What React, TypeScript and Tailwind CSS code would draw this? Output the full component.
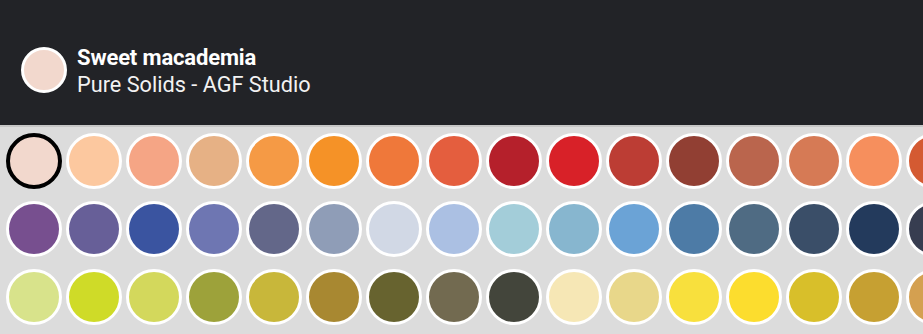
import React from 'react';

const rows: string[][] = [
  ['#f2d8cd', '#fcc89f', '#f5a585', '#e6b185', '#f59a45', '#f59227', '#ef783a', '#e45e3e', '#b5202b', '#d82128', '#bc3d34', '#913f33', '#ba654d', '#d67a55', '#f68f5d', '#d45a32'],
  ['#774f8f', '#675f98', '#3a54a0', '#6e76b2', '#636789', '#8f9db7', '#d1d8e5', '#abc0e3', '#a3cdd9', '#87b6cf', '#6ba3d6', '#4d7ba6', '#4f6b83', '#3a4e68', '#233a5c', '#373d50'],
  ['#d8e38b', '#cfdb28', '#d3d85c', '#9da23a', '#c8b73a', '#a88831', '#67632f', '#726a50', '#43453b', '#f6e7b5', '#e8d78a', '#f8e03d', '#fcdd2e', '#d8bf2a', '#c6a032', '#d4a050'],
];

const App = () => {
  return (
    <div className="w-[923px] h-[334px] overflow-hidden bg-[#dcdcdc]" style={{ fontFamily: 'Roboto, "Liberation Sans", sans-serif' }}>
      <header className="h-[127px] bg-[#222327] border-b-2 border-[#c6c6c6] flex items-center pl-[21px] pt-[12px] gap-[10px]">
        <div className="w-[46px] h-[46px] rounded-full border-[3px] border-white bg-[#f2d8cd] shrink-0 mt-[2px]" />
        <div className="flex flex-col leading-[27px] mt-[5px]">
          <span className="text-white text-[22px] font-bold tracking-[-0.15px]">Sweet macademia</span>
          <span className="text-[#f2f2f2] text-[21.7px]">Pure Solids - AGF Studio</span>
        </div>
      </header>

      <div className="pt-[6px] pl-[6px] flex flex-col gap-[12px]">
        {rows.map((row, r) => (
          <div key={r} className="flex gap-[4px] flex-nowrap">
            {row.map((c, i) => (
              <div
                key={c + i}
                className={
                  r === 0 && i === 0
                    ? 'w-[56px] h-[56px] shrink-0 rounded-full border-4 border-black'
                    : 'w-[56px] h-[56px] shrink-0 rounded-full border-[3px] border-white'
                }
                style={{ backgroundColor: c }}
              />
            ))}
          </div>
        ))}
      </div>
    </div>
  );
};

export default App;
